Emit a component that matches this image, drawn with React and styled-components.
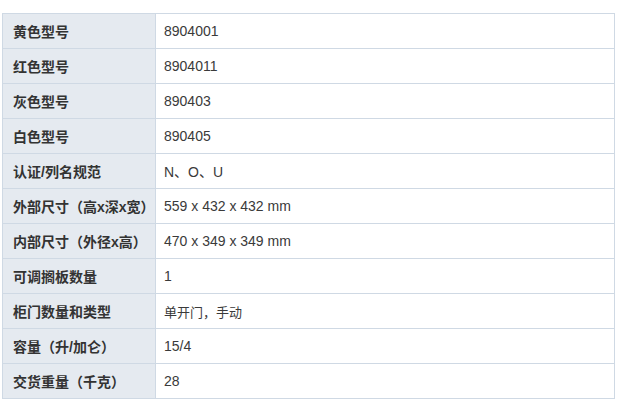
import React from 'react';
import styled, { createGlobalStyle } from 'styled-components';

const GlobalStyle = createGlobalStyle`
  html, body {
    margin: 0;
    padding: 0;
    background: #fff;
  }
  body {
    font-family: "Liberation Sans", "Noto Sans CJK SC", Arial, sans-serif;
  }
`;

const Page = styled.div`
  padding: 13px 0 0 2px;
`;

const Table = styled.table`
  width: 613px;
  border-collapse: collapse;
  table-layout: fixed;
  font-size: 14px;
  color: #333;
`;

const Row = styled.tr`
  height: 35px;
`;

const Label = styled.th`
  width: 153px;
  box-sizing: border-box;
  padding: 0 0 0 10px;
  text-align: left;
  font-weight: bold;
  background: #e5eaf0;
  border: 1px solid #cfd9e4;
  white-space: nowrap;
`;

const Value = styled.td`
  padding: 0 0 0 8px;
  text-align: left;
  border: 1px solid #cfd9e4;
  color: #3a3a3a;
  font-size: ${({ $small }) => ($small ? '13px' : '14px')};
`;

const specs = [
  ['黄色型号', '8904001'],
  ['红色型号', '8904011'],
  ['灰色型号', '890403'],
  ['白色型号', '890405'],
  ['认证/列名规范', 'N、O、U'],
  ['外部尺寸（高x深x宽）', '559 x 432 x 432 mm'],
  ['内部尺寸（外径x高）', '470 x 349 x 349 mm'],
  ['可调搁板数量', '1'],
  ['柜门数量和类型', '单开门，手动', true],
  ['容量（升/加仑）', '15/4'],
  ['交货重量（千克）', '28']
];

const App = () => (
  <Page>
    <GlobalStyle />
    <Table>
      <tbody>
        {specs.map(([label, value, small]) => (
          <Row key={label}>
            <Label>{label}</Label>
            <Value $small={small}>{value}</Value>
          </Row>
        ))}
      </tbody>
    </Table>
  </Page>
);

export default App;
